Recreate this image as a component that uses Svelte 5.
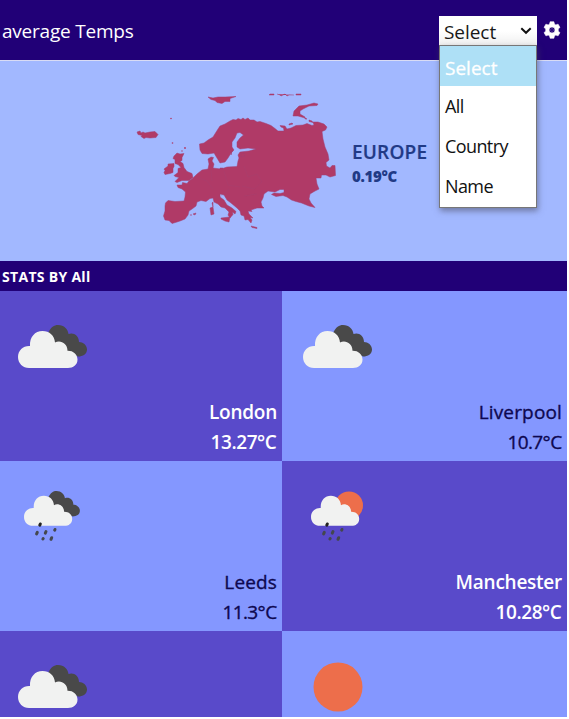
<script>
  const cities = [
    { name: 'London', temp: '13.27°C', icon: 'cloudy', dark: true },
    { name: 'Liverpool', temp: '10.7°C', icon: 'cloudy', dark: false },
    { name: 'Leeds', temp: '11.3°C', icon: 'rain', dark: false },
    { name: 'Manchester', temp: '10.28°C', icon: 'sunrain', dark: true },
    { name: '', temp: '', icon: 'cloudy', dark: true },
    { name: '', temp: '', icon: 'sun', dark: false }
  ];
  const options = ['Select', 'All', 'Country', 'Name'];
</script>

{#snippet whiteCloud()}
  <path fill="#f1f2f1" d="M11 43C5 43 0 38.500 0 32S5 21 11 21h1C11.500 12 17 6 24.500 6c7 0 12 4.500 12.500 11.500C42 14.500 49.500 18 49.500 25.700 55 25.500 59.500 29 59.500 34.500S55 43 50 43Z" />
{/snippet}

{#snippet darkCloud()}
  <path fill="#494949" d="M30 8C33 2 36 0 40 0c6 0 10 4 10.500 9C55 7 61 10 61 17c4 0 8 3 8 7.500S65 31.500 60 31.500L49 26 36 17Z" />
{/snippet}

<div class="page">
  <header>
    <h1>average Temps</h1>
    <div class="select">
      <button class="control">
        <span>Select</span>
        <svg width="12" height="8" viewBox="0 0 12 8"><path d="m1.300 1.300 4.700 4.500 4.700-4.500" fill="none" stroke="#111" stroke-width="2" /></svg>
      </button>
      <ul>
        {#each options as option, i}
          <li class:active={i === 0}>{option}</li>
        {/each}
      </ul>
    </div>
    <svg class="gear" width="18" height="18" viewBox="0 0 24 24">
      <path fill="#fff" fill-rule="evenodd" stroke="#fff" stroke-width=".8" stroke-linejoin="round" d="M9.500 1h5l.7 3.100 1.900 1.100 3-1 2.500 4.300-2.300 2.200v2.600l2.300 2.200-2.500 4.300-3-1-1.900 1.100-.7 3.100h-5l-.7-3.100-1.900-1.100-3 1-2.500-4.300 2.300-2.200v-2.600L1.400 8.500l2.500-4.300 3 1 1.900-1.100ZM12 8a4 4 0 1 0 0 8 4 4 0 0 0 0-8Z" />
      <circle cx="12" cy="12" r="2" fill="none" stroke="#d8d2ec" stroke-width=".8" opacity=".35" />
    </svg>
  </header>

  <section class="hero">
    <svg class="map" width="210" height="150" viewBox="130 85 210 150" fill="#b03a67" stroke="#a33e73" stroke-width=".5">
      <path d="M199.500 144 204 143 208 140 213 137 218 129 220 126 225 124 230 121 233 119.500 236 120 238 118.500 241 119.500 243 118 245 119.500 248 118 250 120 254 120 257 122 260 121.500 266 123.500 271 125.500 275 128.500 278 131 284 131 283.500 128 281 127 280 125.500 285 126 287 129 291 128 296 125.500 303 125 307 123.500 312 125.500 314 125 313 122 318 122 324 124 327 127 325.500 130 322 131.500 323 139 325 147 328 154 329 160 326 162.500 326.500 166 330 168 332 165.500 335 165.500 335.500 175.500 330 177 326 175 321.500 175 321 178 316 178 317 184 319 189 315 191 310 194 309 199 311 203 315 207.500 309 206 301.500 203 296 201.500 291.500 200 287 197 283 195.500 276 196.500 271.500 194.500 274 193 280 193.500 284 192.500 284 189.500 280 189.500 275 192 268 191 264 194 263 198 261 202 262 206 264 208 257 208 251 210 252 211.500 248 211 249 214 253 218 250 217.500 252 220 251 223 248 219.500 245 220 244 216 241 215 240 211 237 208 231 203 227 200 224 195 220 194 220 197 224 200 227 205 232 208 236 211.500 235 214 232.500 212 233 214.500 230 218 228 215 229 212 225 208 221 207 218 204 214 202 213 198 210 198.500 206 201.500 201 200.500 197 202 196 206 192 209 189 211 188 215 185 219 180 221 177 222 172 223.500 169 220.500 165 220 163.500 216 165 211 165 206 165.500 203 168 200.500 175 201.500 184 201 185 197 185.500 192 182 189 178 187.500 177 185 182 185 182.500 182.500 187 183.500 189 181 193 178 197 174 202 170 208 169 209 164 208 159 211 157 213.500 157.500 212 161 214 164 213 168 221 169 227 167 237 166.500 238 161 239 158 238 155 240 152 249 151 256 149 248 148 240 149 237 147 237 142 240 138 243.500 135 240 132.500 237 133 235 138 232 142 232 147 234 150 231 153 228 158 225 162 220 163 217 158 214 153 208 154 202 153.500 200 150Z" />
      <path d="m174 156 3-3 3 1 4-.5-2 4 0 3-2 1 3 2 1 4 3 4 5 2 1 4-4 3-7 0-5 2-2-1 4-4-4-1-1-1 4-3 0-4 3-1-3-3-3-1 0-4-2-1zM164 169l4-3 0-2 6-.5 0 3-1 2 0 4-3 1-5 1-1-2 1-2z" />
      <path d="m137 132 3-1 1 2 2-1 2 1 5-1 5-.5 3 3-2 3-6 .5-4-.5-2 1-3-2 1-1-4-1zM208 97l5 1 5-1 7 0 11-.5-6 2 0 3-5 0-3 2-5-1-2-2-4-1zM293 116l1-5 3-3 2-2 8-1 7-2 4 1-1 1.500-8 .5-6 3-3 2 0 3 5 3 0 1-7-2zM270 94h4v1h-5zm7 0 3 1 1 1 4-2 2 2 2-1h5m2-1h5v1h-5zM289 124l3-1 1 1-4 1zM309 120l3 1 1 1.500-4-1zM305 118l2 1-2 0zM221 218l9-1-1 5-4-1-4-2zM210 208l3-1 1 7-3 1zM212 203l1-1v5zM251 226l6 1.500v1l-5-1zM220 168h3v1h-3zM231 153l1-2-1 4zM241 153l3 0 1 3-4 1zM193 214l3-1-1 2z" />
      <g stroke="none"><circle cx="171" cy="118.500" r=".8" /><circle cx="172.500" cy="143" r=".8" /><circle cx="185" cy="148" r=".9" /><circle cx="182" cy="151" r=".7" /><circle cx="191" cy="215" r=".7" /></g>
      <path d="m199 178 8 3 6 8m-2-19 1 11m12-10 4 14 12 2m4-21 4 11 9-3 5 8-8 7-12-3m2 10 13-2m-28-5-9 8" fill="none" stroke="#9c4a77" stroke-width=".35" opacity=".6" />
    </svg>
    <div class="summary">
      <h2>EUROPE</h2>
      <p>0.19°C</p>
    </div>
  </section>

  <h3>STATS BY All</h3>

  <section class="grid">
    {#each cities as city}
      <article class:dark={city.dark}>
        {#if city.icon === 'cloudy'}
          <svg class="cloudy" width="69" height="43" viewBox="0 0 69 43">{@render darkCloud()}{@render whiteCloud()}</svg>
        {:else if city.icon === 'sun'}
          <svg class="sun" width="50" height="50" viewBox="0 0 50 50"><circle cx="25" cy="25" r="24.500" fill="#ed6e4b" /></svg>
        {:else}
          <svg class="rain" class:sunny={city.icon === 'sunrain'} width="57" height="52" viewBox="0 0 57 52">
            {#if city.icon === 'rain'}
              <g transform="scale(.81)">{@render darkCloud()}</g>
            {:else}
              <circle cx="38" cy="14.500" r="14" fill="#ed6e4b" />
            {/if}
            <g transform="scale(.81)">{@render whiteCloud()}</g>
            <g stroke-linecap="round" stroke-width="3" stroke="#44474e">
              <path d="m16.300 33-.5 1.200" stroke="#222" /><path d="m13.300 41.300-.7 1.600m9.400-2.400-.7 1.600m9.700-3.600-.3.700m-11.500 8.300-.3.500m8.800-1.300-.7 1.600" />
            </g>
          </svg>
        {/if}
        {#if city.name}
          <div class="info"><strong>{city.name}</strong><span>{city.temp}</span></div>
        {/if}
      </article>
    {/each}
  </section>
</div>

<style>
  :global(body) { margin: 0; background: #fff; overflow: hidden; }
  .page { width: 567px; height: 717px; overflow: hidden; font-family: 'Open Sans', 'Noto Sans', sans-serif; background: #a2b8ff; }
  h1, h2, h3, p, ul { margin: 0; padding: 0; }
  header { display: flex; align-items: flex-start; box-sizing: border-box; height: 61px; background: #210077; border-bottom: 1px solid #d9dcf5; color: #fff; }
  h1 { flex: 1; padding: 16px 0 0 2px; font-size: 19px; line-height: 30px; font-weight: 400; letter-spacing: -.22px; }
  .select { position: relative; width: 98px; margin-top: 16px; }
  .control { display: flex; align-items: center; justify-content: space-between; width: 98px; height: 30px; padding: 2px 5px 0; border: 0; background: linear-gradient(#fff 50%, #efefef); color: #181818; font: 400 19px/28px 'Open Sans', sans-serif; letter-spacing: -.05px; }
  .control svg { margin-top: -3px; }
  ul { position: absolute; z-index: 2; top: 29px; left: 0; box-sizing: border-box; width: 98px; height: 163px; border: 1px solid #777; background: #fff; box-shadow: 1px 3px 6px #4458; list-style: none; color: #111; }
  li { height: 40px; padding-left: 5px; font-size: 18px; line-height: 41px; letter-spacing: -.6px; }
  .active { background: #aee0f6; color: #fff; font-size: 19px; line-height: 44px; letter-spacing: 0; -webkit-text-stroke: .3px #fff; }
  .gear { margin: 21px 6px 0 6px; }
  .hero { display: flex; height: 200px; background: #a2b8ff; }
  .map { margin: 24px 0 0 130px; }
  .summary { padding: 78px 0 0 12px; color: #213a86; }
  h2 { font-size: 19px; line-height: 26px; font-weight: 600; letter-spacing: .2px; -webkit-text-stroke: .2px #213a86; }
  p { font-size: 15px; line-height: 23px; font-weight: 800; letter-spacing: -.3px; }
  h3 { height: 30px; padding-left: 2px; background: #210077; color: #fff; font-size: 14px; line-height: 31px; font-weight: 700; letter-spacing: .3px; }
  .grid { display: grid; grid-template-columns: 282px 285px; grid-auto-rows: 170px; }
  article { display: flex; flex-direction: column; justify-content: space-between; align-items: flex-start; background: #8497ff; color: #0e0850; }
  .dark { background: #594aca; color: #fff; }
  .cloudy { margin: 34px 0 0 18px; }
  article:nth-child(2) .cloudy { margin-left: 21px; }
  .rain { margin: 30px 0 0 24px; }
  .sunny { margin-left: 29px; }
  .sun { width: 50px; margin: 31px 0 0 31px; }
  .info { display: flex; flex-direction: column; align-self: flex-end; align-items: flex-end; padding: 0 5px 4px 0; font-size: 19px; line-height: 30px; font-weight: 400; -webkit-text-stroke: .35px #0e0850; }
  strong { font-weight: inherit; letter-spacing: .15px; }
  .info span { margin-right: .5px; letter-spacing: -.6px; }
  .dark .info { font-weight: 600; -webkit-text-stroke: 0; }
  .dark .info strong { letter-spacing: -.25px; }
  .dark .info span { letter-spacing: -.4px; }
</style>
